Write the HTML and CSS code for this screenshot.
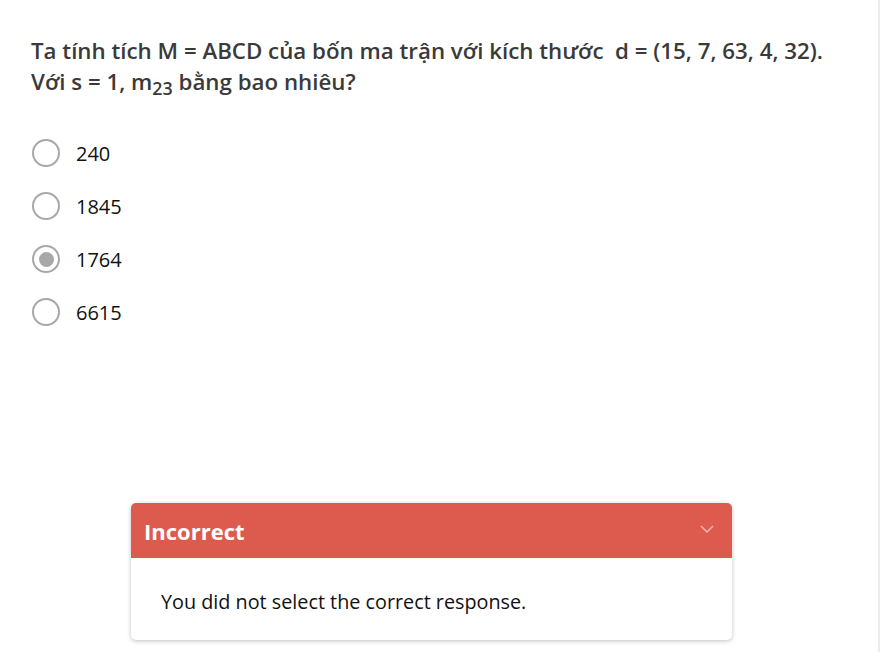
FILE: index.html
```html
<!DOCTYPE html>
<html lang="vi">
<head>
<meta charset="utf-8">
<link rel="stylesheet" href="styles.css">
</head>
<body>
<div class="page">
  <div class="question">Ta tính tích M = ABCD của bốn ma trận với kích thước &nbsp;d = (15, 7, 63, 4, 32). Với s = 1, m<sub>23</sub> bằng bao nhiêu?</div>
  <div class="options">
    <label class="option"><span class="radio"></span><span class="label">240</span></label>
    <label class="option"><span class="radio"></span><span class="label">1845</span></label>
    <label class="option"><span class="radio checked"></span><span class="label">1764</span></label>
    <label class="option"><span class="radio"></span><span class="label">6615</span></label>
  </div>
  <div class="feedback">
    <div class="feedback-head">
      <span class="feedback-title">Incorrect</span>
      <svg class="chev" width="14" height="8" viewBox="0 0 14 8"><path d="M1 1 L7 7 L13 1" fill="none" stroke="rgba(255,255,255,0.55)" stroke-width="1.5"/></svg>
    </div>
    <div class="feedback-body">You did not select the correct response.</div>
  </div>
</div>
</body>
</html>
```
FILE: styles.css
```css
html, body {
  margin: 0;
  padding: 0;
  background: #fff;
}
.page {
  width: 880px;
  height: 652px;
  border-right: 2px solid #ececec;
  box-sizing: border-box;
  font-family: "Open Sans", sans-serif;
  padding-top: 35px;
}
.question {
  width: 810px;
  margin-left: 31px;
  font-size: 22.3px;
  font-weight: 600;
  line-height: 31px;
  color: #3a3a3a;
}
.question sub {
  font-size: 0.8em;
  vertical-align: -0.3em;
  line-height: 0;
}
.options {
  margin-top: 42px;
  margin-left: 32px;
  display: flex;
  flex-direction: column;
  gap: 25px;
}
.option {
  display: flex;
  align-items: center;
  height: 28px;
}
.radio {
  width: 28px;
  height: 28px;
  border: 2.5px solid #a8a8a8;
  border-radius: 50%;
  box-sizing: border-box;
  display: flex;
  align-items: center;
  justify-content: center;
}
.radio.checked::after {
  content: "";
  width: 15px;
  height: 15px;
  border-radius: 50%;
  background: #a8a8a8;
}
.label {
  margin-left: 16px;
  font-size: 20px;
  color: #111;
}
.feedback {
  margin: 177px 0 0 131px;
  width: 601px;
  border-radius: 5px;
  background: #fff;
  box-shadow: 0 1px 4px rgba(0,0,0,0.25);
  overflow: hidden;
}
.feedback-head {
  background: #dc5b4e;
  height: 55px;
  display: flex;
  align-items: center;
  justify-content: space-between;
  padding: 0 18px 0 13px;
}
.feedback-title {
  color: #fff;
  font-size: 22px;
  font-weight: 700;
}
.chev {
  margin-top: -4px;
}
.feedback-body {
  padding: 30px 30px 25px;
  font-size: 19.8px;
  color: #111;
  line-height: 27px;
}
```
